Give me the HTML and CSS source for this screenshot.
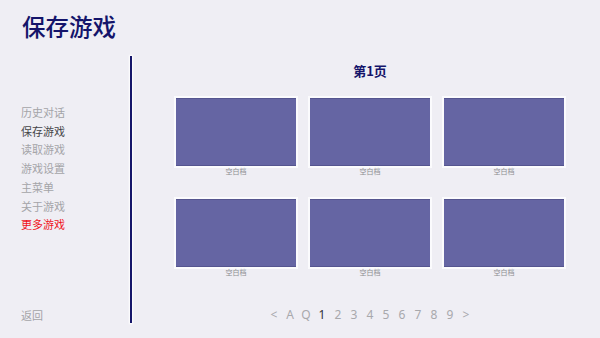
FILE: index.html
```html
<!DOCTYPE html>
<html lang="zh-CN">
<head>
<meta charset="utf-8">
<title>保存游戏</title>
<link rel="stylesheet" href="styles.css">
</head>
<body>
<div class="screen">
  <header class="header"><h1 class="title">保存游戏</h1></header>
  <div class="body">
    <nav class="nav">
      <ul class="menu">
        <li class="item">历史对话</li>
        <li class="item active">保存游戏</li>
        <li class="item">读取游戏</li>
        <li class="item">游戏设置</li>
        <li class="item">主菜单</li>
        <li class="item">关于游戏</li>
        <li class="item more">更多游戏</li>
      </ul>
      <div class="item back">返回</div>
    </nav>
    <div class="divider"></div>
    <main class="main">
      <h2 class="page-title">第1页</h2>
      <div class="slots">
        <div class="slot"><div class="shot"></div><div class="cap">空白档</div></div>
        <div class="slot"><div class="shot"></div><div class="cap">空白档</div></div>
        <div class="slot"><div class="shot"></div><div class="cap">空白档</div></div>
        <div class="slot"><div class="shot"></div><div class="cap">空白档</div></div>
        <div class="slot"><div class="shot"></div><div class="cap">空白档</div></div>
        <div class="slot"><div class="shot"></div><div class="cap">空白档</div></div>
      </div>
      <div class="pager">
        <span class="pg">&lt;</span>
        <span class="pg">A</span>
        <span class="pg">Q</span>
        <span class="pg current">1</span>
        <span class="pg">2</span>
        <span class="pg">3</span>
        <span class="pg">4</span>
        <span class="pg">5</span>
        <span class="pg">6</span>
        <span class="pg">7</span>
        <span class="pg">8</span>
        <span class="pg">9</span>
        <span class="pg">&gt;</span>
      </div>
    </main>
  </div>
</div>
</body>
</html>
```
FILE: styles.css
```css
* { box-sizing: border-box; }
html, body { margin: 0; padding: 0; }
body {
  width: 600px;
  height: 338px;
  overflow: hidden;
  background: #efeef4;
  font-family: "Noto Sans CJK SC", "Noto Sans", sans-serif;
}
.screen { width: 600px; height: 338px; display: flex; flex-direction: column; }
.header { height: 56px; padding: 14px 0 0 22px; }
.title {
  margin: 0;
  font-size: 23.5px;
  line-height: 24px;
  font-weight: 500;
  color: #14146a;
}
.body { flex: 1; display: flex; align-items: flex-start; }
.nav {
  width: 130px;
  height: 267px;
  padding: 47px 0 0 21px;
  display: flex;
  flex-direction: column;
  justify-content: space-between;
}
.menu { list-style: none; margin: 0; padding: 0; }
.item {
  font-size: 11px;
  line-height: 18.7px;
  color: #a4a4a8;
}
.item.active { color: #454548; }
.item.more { color: #f0141e; }
.back { line-height: 18px; margin-bottom: -1px; }
.divider {
  width: 2px;
  height: 267px;
  background: #16166a;
  box-shadow: 0 0 2px 1px #ffffff;
}
.main {
  flex: 1;
  height: 282px;
  padding-left: 8px;
  display: flex;
  flex-direction: column;
  align-items: center;
}
.page-title {
  margin: 7px 0 0;
  font-size: 13px;
  line-height: 16px;
  font-weight: 700;
  color: #14146a;
}
.slots {
  margin-top: 19px;
  display: grid;
  grid-template-columns: repeat(3, 120px);
  grid-auto-rows: 101px;
  column-gap: 14px;
}
.slot { display: flex; flex-direction: column; align-items: center; }
.shot {
  width: 120px;
  height: 68px;
  background: #6565a3;
  border-top: 1px solid #55558f;
  border-bottom: 1px solid #55558f;
  box-shadow: 0 0 0 2px #fbfbfd;
}
.cap {
  margin-top: 1px;
  font-size: 7px;
  line-height: 9px;
  color: #8c8c90;
}
.pager {
  margin-top: auto;
  margin-bottom: 16px;
  display: flex;
}
.pg {
  width: 16px;
  text-align: center;
  font-family: "Noto Sans", sans-serif;
  font-size: 12px;
  line-height: 14px;
  color: #a8a8ac;
}
.pg.current { color: #333336; }
```
